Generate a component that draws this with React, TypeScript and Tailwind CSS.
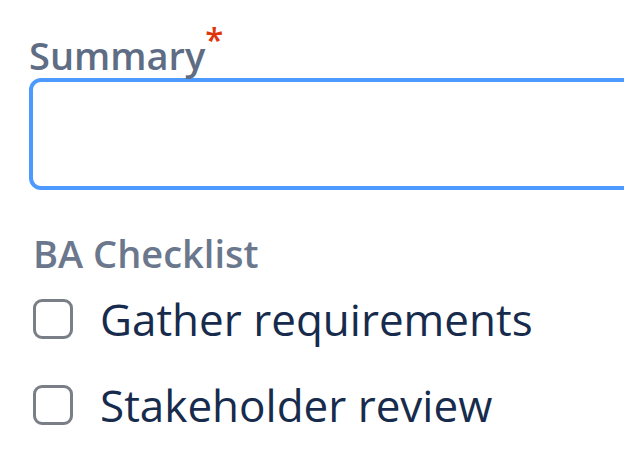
import { useState } from "react"

const items = ["Gather requirements", "Stakeholder review"]

function CheckItem({ label }: { label: string }) {
  const [checked, setChecked] = useState(false)

  return (
    <label className="flex h-[86px] cursor-pointer items-center gap-[27px]">
      <span
        className={`flex h-[40px] w-[40px] shrink-0 items-center justify-center rounded-[9px] border-[3.5px] ${
          checked ? "border-[#0052cc] bg-[#0052cc]" : "border-[#7a7f87] bg-white"
        }`}
        onClick={() => setChecked(!checked)}
      />
      <span className="text-[44px] leading-[56px] text-[#172b4d]">{label}</span>
    </label>
  )
}

export default function App() {
  return (
    <div
      className="h-[458px] w-[624px] overflow-hidden bg-white pl-[29px] pt-[32px]"
      style={{ fontFamily: '"Open Sans", "Noto Sans", sans-serif' }}
    >
      <div className="flex items-start text-[38px] font-semibold leading-[46px] text-[#5e6c84]">
        <span>Summary</span>
        <span className="-mt-[7px] text-[33px] leading-[30px] text-[#de350b]">*</span>
      </div>
      <div className="h-[112px] w-[700px] rounded-[12px] border-[4px] border-[#4c9aff] bg-white" />
      <div className="mt-[40px] pl-[4px] text-[38px] font-semibold leading-[46px] text-[#6b778c]">BA Checklist</div>
      <div className="flex flex-col pl-[4px]">
        {items.map((item) => (
          <CheckItem key={item} label={item} />
        ))}
      </div>
    </div>
  )
}
